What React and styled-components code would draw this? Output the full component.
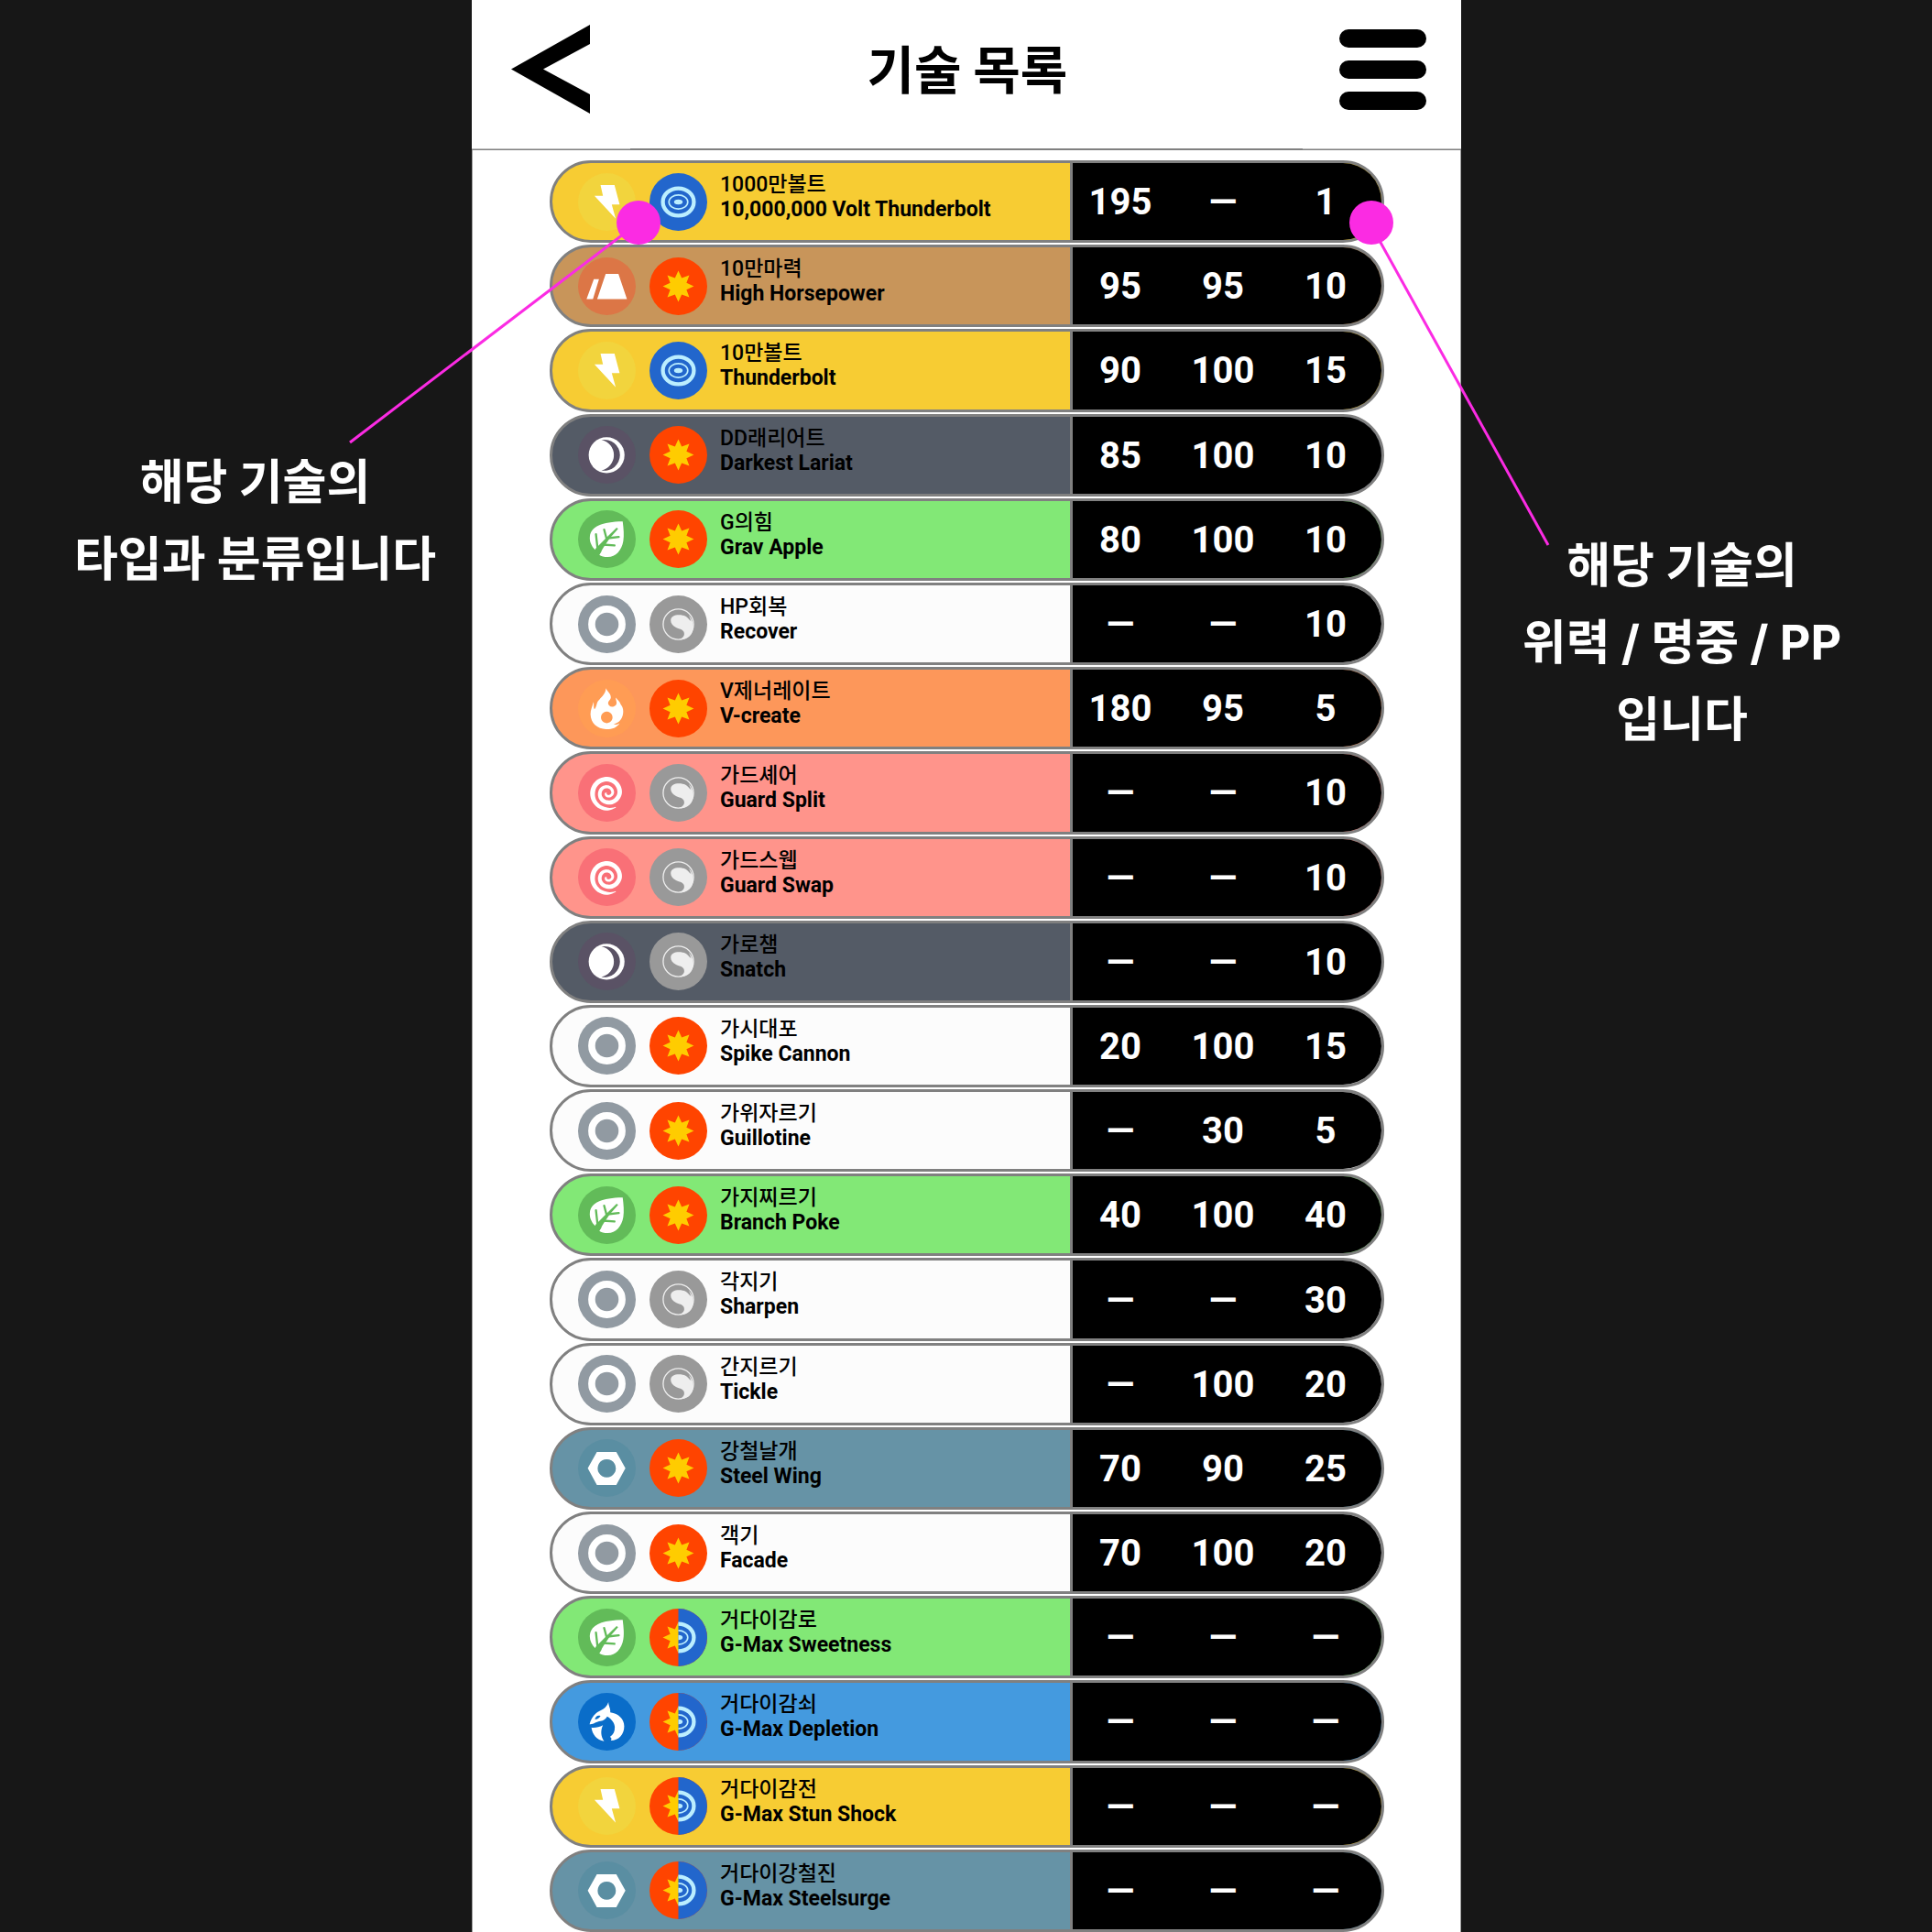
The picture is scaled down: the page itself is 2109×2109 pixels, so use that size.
import React from "react";
import styled, { createGlobalStyle } from "styled-components";

const GlobalStyle = createGlobalStyle`
  *, *::before, *::after { box-sizing: border-box; }
  html, body { margin: 0; background: #171717; }
  body { font-family: Roboto, "Noto Sans CJK KR", sans-serif; }
`;

const Page = styled.div`
  position: relative;
  display: grid;
  grid-template-columns: 515fr 1080fr 514fr;
  min-height: 100vh;
  overflow: hidden;
`;

const Note = styled.aside`
  padding: ${(p) => (p.$side === "left" ? "485px 0 0 42px" : "576px 32px 0 0")};
  color: #fff;
  font-family: Inter, "Noto Sans CJK KR", sans-serif;
  font-weight: 700;
  font-size: 52px;
  line-height: 84px;
  text-align: center;
`;

const NoteLine = styled.div`
  white-space: nowrap;
`;

const Pointers = styled.svg`
  position: absolute;
  top: 0;
  left: 0;
  width: 100%;
  height: auto;
  pointer-events: none;
`;

const Phone = styled.main`
  display: flex;
  flex-direction: column;
  min-width: 0;
  background: #fff;
`;

const Header = styled.header`
  display: flex;
  align-items: center;
  justify-content: space-between;
  height: 164px;
  padding: 0 38px 12px 43px;
  border-bottom: 1px solid #808080;
  background: linear-gradient(90deg, #bbb 16%, #808080 16% 84%, #bbb 84%) 0 100% / 100% 1px no-repeat;
`;

const IconButton = styled.button`
  display: flex;
  flex-direction: column;
  gap: 14px;
  padding: 0;
  border: 0;
  background: none;
  cursor: pointer;
`;

const MenuBar = styled.span`
  width: 95px;
  height: 20px;
  border-radius: 10px;
  background: #000;
`;

const Title = styled.h1`
  margin: 0;
  padding: 0 0 6px 6px;
  font-family: "Noto Sans CJK KR", sans-serif;
  font-weight: 700;
  font-size: 56px;
  line-height: 80px;
`;

const Body = styled.div`
  display: flex;
  flex: 1;
  padding: 11px 83px 0 84px;
  border: solid #a0a0a0;
  border-width: 0 1px;
`;

const MoveTable = styled.table`
  display: flex;
  flex: 1;
  min-width: 0;
`;

const Moves = styled.tbody`
  display: flex;
  flex: 1;
  flex-direction: column;
  gap: 2px;
`;

const MoveRow = styled.tr`
  display: flex;
  flex: 1;
  min-height: 90px;
  border: 3px solid #808080;
  border-radius: 45px;
  overflow: hidden;
  background: ${(p) => p.$color};
`;

const Kinds = styled.td`
  display: flex;
  align-items: center;
  gap: 15px;
  padding: 0 14px 0 28px;
`;

const Badge = styled.svg`
  width: 63px;
  height: 63px;
`;

const Names = styled.th`
  flex: 1;
  min-width: 0;
  padding: 10px 0 0;
  font-size: 23px;
  line-height: 27px;
  text-align: left;
  white-space: nowrap;
`;

const NameLine = styled.div`
  font-weight: ${(p) => (p.$strong ? 700 : 500)};
`;

const Stat = styled.td`
  display: flex;
  align-items: center;
  justify-content: center;
  flex: 0 0 112px;
  padding: 2px 2px 0 0;
  background: #000;
  color: #fff;
  font-weight: 700;
  font-size: 40px;
  line-height: 48px;

  &:nth-child(3) {
    box-shadow: inset 3px 0 0 #808080;
  }
  &:last-child {
    flex-basis: 116px;
    padding-right: 6px;
  }
`;

/* Badge drawings share a 190 x 190 canvas. */

const star = Array.from({ length: 16 }, (_, i) => {
  const r = i % 2 ? 29 : 51;
  const a = (i * Math.PI) / 8 - Math.PI / 2;
  return `${(95 + r * Math.cos(a)).toFixed(1)},${(95 + r * Math.sin(a)).toFixed(1)}`;
}).join(" ");

/* Each entry is [turns from the tail, radius, stroke thickness]. */
const SPIRAL_KEYS = [
  [0, 55, 2],
  [0.1, 53, 11],
  [0.34, 48, 16],
  [0.59, 45, 15],
  [0.84, 41, 15],
  [1.09, 31, 14],
  [1.34, 24, 12],
  [1.59, 20, 10],
  [1.84, 18, 9],
  [2.09, 10, 9],
  [2.35, 3, 7],
];

const spiral = (() => {
  const outer = [];
  const inner = [];
  for (let i = 0; i <= 120; i++) {
    const turn = (i / 120) * 2.35;
    const k = Math.max(1, SPIRAL_KEYS.findIndex(([t]) => t >= turn - 1e-9));
    const [t0, r0, w0] = SPIRAL_KEYS[k - 1];
    const [t1, r1, w1] = SPIRAL_KEYS[k];
    const f = (turn - t0) / (t1 - t0);
    const r = r0 + (r1 - r0) * f;
    const half = (w0 + (w1 - w0) * f) / 2;
    const a = 1.03 + turn * 2 * Math.PI;
    outer.push(`${(96 + (r + half) * Math.cos(a)).toFixed(1)},${(95 + (r + half) * Math.sin(a)).toFixed(1)}`);
    inner.unshift(`${(96 + (r - half) * Math.cos(a)).toFixed(1)},${(95 + (r - half) * Math.sin(a)).toFixed(1)}`);
  }
  return outer.concat(inner).join(" ");
})();

const TYPES = {
  electric: {
    row: "#f7cc33",
    disc: "#f2d43d",
    art: <path fill="#fff" d="M74 39H120L137 103H111L124 150L54 75H82Z" />,
  },
  ground: {
    row: "#c8955a",
    disc: "#dc7646",
    art: <path fill="#fff" d="M52 72H69L49 137H28ZM91 54H133L161 137H63Z" />,
  },
  dark: {
    row: "#545b66",
    disc: "#5a5265",
    art: (
      <>
        <circle cx="94" cy="96" r="59" fill="#fff" />
        <path fill="#5a5265" d="M77 46A51 51 0 1 1 77 146A51 51 0 0 0 77 46Z" />
      </>
    ),
  },
  grass: {
    row: "#82e876",
    disc: "#62bb59",
    art: (
      <>
        <path
          fill="#fff"
          d="M147 37C150 60 152 84 149 101C144 132 124 154 98 154C86 154 76 152 70 147L78 134L56 130C44 118 37 102 39 86C43 54 78 38 147 37Z"
        />
        <path fill="#62bb59" d="M48 150L58 126L94 90L127 57L132 61L104 93L84 122L66 152Z" />
        <path
          d="M64 124L59 79M94 94L86 64M98 92L134 88M80 113L120 116"
          stroke="#62bb59"
          strokeWidth="7"
          strokeLinecap="round"
        />
      </>
    ),
  },
  normal: {
    row: "#fcfcfc",
    disc: "#919aa2",
    art: <circle cx="95" cy="95" r="50" fill="none" stroke="#fff" strokeWidth="23" />,
  },
  fire: {
    row: "#fd975a",
    disc: "#ff9c54",
    art: (
      <path
        fill="#fff"
        fillRule="evenodd"
        d="M92 28C97 40 108 46 108 58C108 66 99 69 99 77C99 84 105 89 112 89C120 89 127 83 127 76C127 69 123 66 125 59C129 67 137 70 141 82C151 92 152 116 140 132C135 140 126 144 117 146C125 149 132 147 137 143C127 159 108 164 92 163C64 162 42 144 41 114C41 98 47 88 51 73C53 80 50 90 54 97C62 90 60 76 68 68C78 56 90 48 92 28ZM94 105A19 19 0 1 0 95 105Z"
      />
    ),
  },
  psychic: {
    row: "#ff948b",
    disc: "#f97077",
    art: <polygon fill="#fff" points={spiral} />,
  },
  steel: {
    row: "#6693a6",
    disc: "#5a8ea2",
    art: (
      <path
        fill="#fff"
        fillRule="evenodd"
        d="M32 96L62 42H126L156 96L126 151H62ZM94 66A30 30 0 1 0 95 66Z"
      />
    ),
  },
  dragon: {
    row: "#449adf",
    disc: "#0a6dc9",
    art: (
      <>
        <path
          fill="#fff"
          d="M100 30C100 42 108 52 106 64C134 68 152 86 152 110C152 136 134 157 108 157C112 152 110 148 105 145C116 138 121 128 121 114C121 100 110 86 96 78C92 86 84 92 74 93C60 94 50 105 38 103C40 92 48 76 60 66C74 56 92 54 100 30Z"
        />
        <path fill="#fff" d="M44 114C56 116 70 112 82 106C74 122 74 142 86 159C62 155 47 138 44 114Z" />
        <path fill="#0a6dc9" d="M55 87C58 77 66 72 74 76C70 83 63 87 55 87Z" />
      </>
    ),
  },
};

const TypeBadge = ({ type }) => (
  <Badge viewBox="0 0 190 190" role="img" aria-label={type}>
    <circle cx="95" cy="95" r="95" fill={TYPES[type].disc} />
    {TYPES[type].art}
  </Badge>
);

const PhysicalArt = () => (
  <>
    <circle cx="95" cy="95" r="95" fill="#ff4400" />
    <polygon points={star} fill="#ffcc00" />
  </>
);

const SpecialArt = () => (
  <>
    <circle cx="95" cy="95" r="95" fill="#2266cc" />
    <g fill="none" stroke="#bbeeff">
      <ellipse cx="95" cy="95" rx="51" ry="45" strokeWidth="13" />
      <ellipse cx="95" cy="95" rx="31" ry="23" strokeWidth="5" />
    </g>
    <ellipse cx="95" cy="95" rx="14" ry="8" fill="#bbeeff" />
  </>
);

const CategoryBadge = ({ category }) => (
  <Badge viewBox="0 0 190 190" role="img" aria-label={category}>
    {category === "physical" && <PhysicalArt />}
    {category === "special" && <SpecialArt />}
    {category === "status" && (
      <>
        <circle cx="95" cy="95" r="95" fill="#999" />
        <circle cx="95" cy="95" r="50" fill="none" stroke="#eee" strokeWidth="4" />
        <path
          fill="#eee"
          d="M70 82C70 70 82 64 97 64C114 64 126 70 134 84C138 80 132 74 130 66C150 90 148 118 132 134C124 142 112 146 98 145C112 140 117 130 113 120C108 110 98 112 86 105C76 99 70 92 70 82Z"
        />
      </>
    )}
    {category === "max" && (
      <>
        <PhysicalArt />
        <svg x="95" y="0" width="95" height="190" viewBox="95 0 95 190">
          <SpecialArt />
        </svg>
      </>
    )}
  </Badge>
);

const MOVES = [
  ["electric", "special", "1000만볼트", "10,000,000 Volt Thunderbolt", 195, null, 1],
  ["ground", "physical", "10만마력", "High Horsepower", 95, 95, 10],
  ["electric", "special", "10만볼트", "Thunderbolt", 90, 100, 15],
  ["dark", "physical", "DD래리어트", "Darkest Lariat", 85, 100, 10],
  ["grass", "physical", "G의힘", "Grav Apple", 80, 100, 10],
  ["normal", "status", "HP회복", "Recover", null, null, 10],
  ["fire", "physical", "V제너레이트", "V-create", 180, 95, 5],
  ["psychic", "status", "가드셰어", "Guard Split", null, null, 10],
  ["psychic", "status", "가드스웹", "Guard Swap", null, null, 10],
  ["dark", "status", "가로챔", "Snatch", null, null, 10],
  ["normal", "physical", "가시대포", "Spike Cannon", 20, 100, 15],
  ["normal", "physical", "가위자르기", "Guillotine", null, 30, 5],
  ["grass", "physical", "가지찌르기", "Branch Poke", 40, 100, 40],
  ["normal", "status", "각지기", "Sharpen", null, null, 30],
  ["normal", "status", "간지르기", "Tickle", null, 100, 20],
  ["steel", "physical", "강철날개", "Steel Wing", 70, 90, 25],
  ["normal", "physical", "객기", "Facade", 70, 100, 20],
  ["grass", "max", "거다이감로", "G-Max Sweetness", null, null, null],
  ["dragon", "max", "거다이감쇠", "G-Max Depletion", null, null, null],
  ["electric", "max", "거다이감전", "G-Max Stun Shock", null, null, null],
  ["steel", "max", "거다이강철진", "G-Max Steelsurge", null, null, null],
];

export default function App() {
  return (
    <>
      <GlobalStyle />
      <Page>
        <Note $side="left">
          <NoteLine>해당 기술의</NoteLine>
          <NoteLine>타입과 분류입니다</NoteLine>
        </Note>

        <Phone>
          <Header>
            <IconButton type="button" aria-label="뒤로">
              <svg width="86" height="97" viewBox="0 0 86 97">
                <path d="M86 0V21L35 48.500L86 76V97L0 48.500Z" fill="#000" />
              </svg>
            </IconButton>
            <Title>기술 목록</Title>
            <IconButton type="button" aria-label="메뉴">
              <MenuBar />
              <MenuBar />
              <MenuBar />
            </IconButton>
          </Header>

          <Body>
            <MoveTable aria-label="기술 목록">
              <Moves>
                {MOVES.map(([type, category, korean, english, ...stats]) => (
                  <MoveRow key={english} $color={TYPES[type].row}>
                    <Kinds>
                      <TypeBadge type={type} />
                      <CategoryBadge category={category} />
                    </Kinds>
                    <Names scope="row">
                      <NameLine>{korean}</NameLine>
                      <NameLine $strong>{english}</NameLine>
                    </Names>
                    {stats.map((value, i) => (
                      <Stat key={i}>{value ?? "—"}</Stat>
                    ))}
                  </MoveRow>
                ))}
              </Moves>
            </MoveTable>
          </Body>
        </Phone>

        <Note $side="right">
          <NoteLine>해당 기술의</NoteLine>
          <NoteLine>위력 / 명중 / PP</NoteLine>
          <NoteLine>입니다</NoteLine>
        </Note>

        <Pointers viewBox="0 0 2109 2109" aria-hidden="true">
          <g stroke="#fb2be3" strokeWidth="3">
            <line x1="697" y1="243" x2="382" y2="483" />
            <line x1="1495" y1="243" x2="1690" y2="595" />
          </g>
          <g fill="#fb2be3">
            <circle cx="697" cy="243" r="24" />
            <circle cx="1497" cy="243" r="24" />
          </g>
        </Pointers>
      </Page>
    </>
  );
}
